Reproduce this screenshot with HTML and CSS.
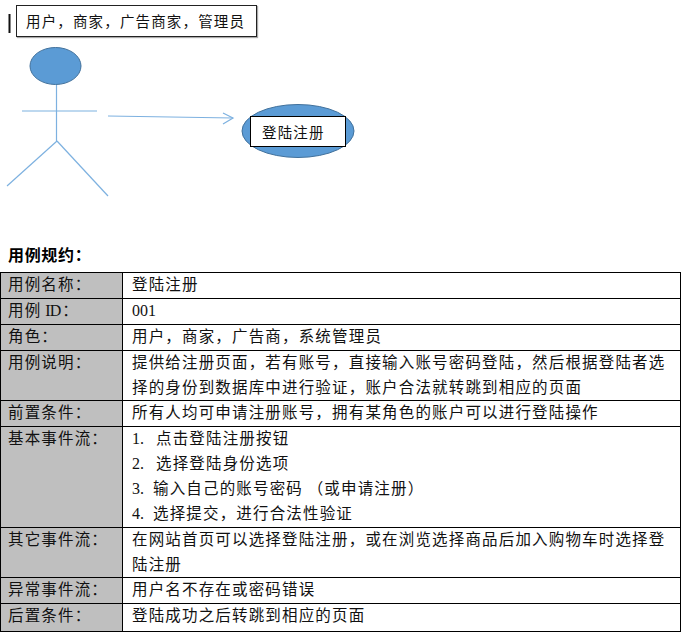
FILE: index.html
```html
<!DOCTYPE html>
<html lang="zh">
<head>
<meta charset="utf-8">
<title>用例规约</title>
<link rel="stylesheet" href="styles.css">
</head>
<body>
<div class="diagram">
  <svg class="shapes" width="682" height="240" viewBox="0 0 682 240">
    <rect x="8.5" y="14" width="2" height="19" fill="#111"/>
    <ellipse cx="55.5" cy="66" rx="25.5" ry="18.5" fill="#5b9bd5" stroke="#41719c" stroke-width="1"/>
    <g fill="none" stroke="#7db1e0" stroke-width="1.2">
      <path d="M56.5 85V141"/>
      <path d="M22 111H97"/>
      <path d="M57 141L7 186"/>
      <path d="M57 141L108 196"/>
      <path d="M108 116L233 118"/>
      <path d="M223 113L233 118L223 124"/>
    </g>
    <ellipse cx="298" cy="131" rx="56" ry="26.5" fill="#5b9bd5" stroke="#41719c" stroke-width="1"/>
  </svg>
  <div class="label label-actors">用户，商家，广告商家，管理员</div>
  <div class="label label-case">登陆注册</div>
</div>
<h1 class="title">用例规约：</h1>
<table class="spec">
  <tr><th>用例名称：</th><td>登陆注册</td></tr>
  <tr><th>用例<span class="latin latin-id">ID</span>：</th><td><span class="latin">001</span></td></tr>
  <tr><th>角色：</th><td>用户，商家，广告商，系统管理员</td></tr>
  <tr class="tight"><th>用例说明：</th><td>提供给注册页面，若有账号，直接输入账号密码登陆，然后根据登陆者选择的身份到数据库中进行验证，账户合法就转跳到相应的页面</td></tr>
  <tr><th>前置条件：</th><td>所有人均可申请注册账号，拥有某角色的账户可以进行登陆操作</td></tr>
  <tr><th>基本事件流：</th><td>
    <div><span class="latin num num-wide">1.</span>点击登陆注册按钮</div>
    <div><span class="latin num num-wide">2.</span>选择登陆身份选项</div>
    <div><span class="latin num">3.</span>输入自己的账号密码 （或申请注册）</div>
    <div><span class="latin num">4.</span>选择提交，进行合法性验证</div>
  </td></tr>
  <tr class="tight"><th>其它事件流：</th><td>在网站首页可以选择登陆注册，或在浏览选择商品后加入购物车时选择登陆注册</td></tr>
  <tr><th>异常事件流：</th><td>用户名不存在或密码错误</td></tr>
  <tr class="last"><th>后置条件：</th><td>登陆成功之后转跳到相应的页面</td></tr>
</table>
</body>
</html>
```
FILE: styles.css
```css
html, body {
  margin: 0;
  padding: 0;
  background: #fff;
}
body {
  width: 682px;
  color: #111;
  font-family: "Noto Sans CJK SC", "Liberation Sans", sans-serif;
  overflow: hidden;
}
.diagram {
  position: relative;
  height: 240px;
}
.shapes {
  display: block;
}
.label {
  position: absolute;
  box-sizing: border-box;
  background: #fff;
  border: 1px solid #222;
  font-size: 14.5px;
  letter-spacing: 1.15px;
  white-space: nowrap;
}
.label-actors {
  left: 16px;
  top: 5px;
  width: 241px;
  height: 32px;
  padding-left: 9px;
  line-height: 30px;
  box-shadow: 1px 1px 1px #aaa;
}
.label-case {
  left: 250px;
  top: 116px;
  width: 96px;
  height: 31px;
  padding-left: 11px;
  line-height: 30px;
  border-width: 1.5px;
  border-color: #000;
}
.title {
  margin: 0;
  padding-left: 8px;
  height: 32px;
  font-size: 16px;
  letter-spacing: 0.67px;
  font-weight: 700;
  line-height: 29px;
  color: #000;
}
.spec {
  border-collapse: collapse;
  table-layout: fixed;
  width: 681px;
  font-size: 15.5px;
  letter-spacing: 1.17px;
  line-height: 25px;
}
.spec th, .spec td {
  border: 1px solid #000;
  padding: 0;
  vertical-align: top;
  text-align: left;
  font-weight: 400;
}
.spec th::before, .spec td::before {
  content: "";
  display: block;
  margin-top: -2px;
}
.spec th::after, .spec td::after {
  content: "";
  display: block;
  height: 2px;
}
.spec th {
  width: 114px;
  padding-left: 7px;
  background: #bfbfbf;
}
.spec td {
  padding-left: 9px;
}
.tight td, .tight th {
  line-height: 24.5px;
}
.last td, .last th {
  height: 27px;
}
.latin {
  font-family: "Liberation Serif", serif;
  font-size: 16px;
  letter-spacing: 0;
  line-height: 0;
}
.latin-id {
  margin-left: 4px;
  margin-right: 2px;
  letter-spacing: -1px;
}
.num {
  display: inline-block;
  line-height: 1;
  width: 21px;
}
.num-wide {
  width: 24px;
}
```
